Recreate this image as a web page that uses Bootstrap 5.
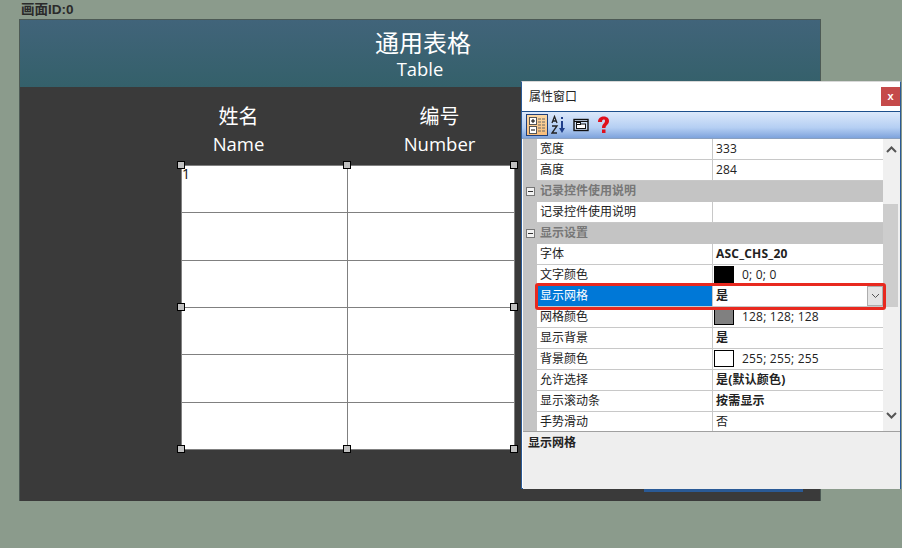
<!DOCTYPE html>
<html lang="zh-CN">

<head>
    <meta charset="UTF-8">
    <title>通用表格</title>
    <link href="https://cdn.jsdelivr.net/npm/bootstrap@5.3.0/dist/css/bootstrap.min.css" rel="stylesheet">
    <style>
        html, body {
            width: 902px;
            height: 548px;
            overflow: hidden;
        }

        body {
            background-color: #8b9b8c;
            font-family: "Open Sans", "Noto Sans CJK SC", sans-serif;
            position: relative;
        }

        .screen-id {
            height: 19px;
            padding-left: 21px;
            font: bold 13.5px/20px "Liberation Sans", "Noto Sans CJK SC", sans-serif;
            color: #2a2a2a;
        }

        .screen {
            width: 802px;
            height: 482px;
            margin-left: 19px;
            background: #3a3a3a;
            border: 1px solid #4d5a55;
            border-bottom: 0;
            color: #fff;
        }

        .screen-head {
            height: 67px;
            padding-top: 7px;
            background: linear-gradient(#41647a, #34606a);
            text-align: center;
            line-height: 1;
        }

        .head-cn { font-size: 24px; line-height: 32px; padding-left: 6px; }
        .head-en { font-size: 18.4px; line-height: 19px; }

        .col-heads {
            padding-left: 118px;
            height: 78px;
            text-align: center;
        }

        .col-head { width: 201px; padding-top: 15px; }
        .col-head div:first-child { font-size: 20px; line-height: 30px; }
        .col-head div:last-child { font-size: 18.5px; line-height: 24px; }

        .data-wrap {
            position: relative;
            width: 334px;
            margin-left: 161px;
        }

        .data-grid {
            width: 334px;
            height: 285px;
            display: grid;
            grid-template-columns: 166px 167px;
            grid-template-rows: repeat(6, 1fr);
            background: #fff;
            border-top: 1px solid #808080;
            border-left: 1px solid #808080;
            color: #111;
        }

        .data-grid div {
            border-right: 1px solid #808080;
            border-bottom: 1px solid #808080;
            font-size: 14px;
            line-height: 16px;
        }

        .handle {
            position: absolute;
            width: 8px;
            height: 8px;
            background: #c0c0c0;
            border: 1px solid #000;
        }

        .blue-strip {
            position: absolute;
            left: 644px;
            top: 489px;
            width: 159px;
            height: 3px;
            background: #2a5a96;
        }

        .prop-win {
            position: absolute;
            left: 521px;
            top: 81px;
            width: 380px;
            height: 408px;
            background: #fff;
            border: 1px solid #2a5a96;
            border-top-color: #d8d8d8;
            font-size: 12px;
            color: #222;
        }

        .win-title {
            height: 30px;
            padding: 0 0 0 7px;
            background: #fff;
            border-bottom: 1px solid #1d4f8c;
            font-size: 12px;
        }

        .win-close {
            width: 19px;
            height: 19px;
            background: #c54a4a;
            color: #fff;
            font: bold 11px/18px "Liberation Sans", sans-serif;
            text-align: center;
        }

        .win-tools {
            height: 27px;
            padding: 0 0 0 4px;
            background: linear-gradient(#dbe8fb, #b5cff3 60%, #7ea3dc);
            border-bottom: 1px solid #8aa0bf;
        }

        .tool-btn {
            width: 22px;
            height: 22px;
        }

        .tool-on {
            background: linear-gradient(#fcd8a4, #f9bd79);
            border: 1px solid #1f3f7a;
        }

        .prop-body {
            height: 292px;
            margin-left: 1px;
            overflow: hidden;
        }

        .prop-rows {
            width: 360px;
            background: #c4c4c4;
            line-height: 20px;
        }

        .prop-row {
            height: 21px;
            padding-left: 14px;
        }

        .prop-name {
            width: 176px;
            height: 21px;
            padding-left: 3px;
            background: #fff;
            border-right: 1px solid #c8c8c8;
            border-bottom: 1px solid #c8c8c8;
        }

        .prop-val {
            width: 170px;
            height: 21px;
            padding-left: 3px;
            background: #fff;
            border-bottom: 1px solid #c8c8c8;
            white-space: nowrap;
            letter-spacing: .2px;
        }

        .prop-group {
            height: 21px;
            padding-bottom: 2px;
            color: #777;
            font-weight: 700;
        }

        .minus-box {
            width: 9px;
            height: 9px;
            margin: 2px 5px 0 3px;
            background: #f2f2f2;
            border: 1px solid #777;
            position: relative;
        }

        .minus-box::after {
            content: "";
            position: absolute;
            left: 1px;
            right: 1px;
            top: 3px;
            height: 1px;
            background: #333;
        }

        .swatch {
            width: 20px;
            height: 17px;
            margin: 1px 8px 0 -2px;
            border: 1px solid #000;
        }

        .row-active .prop-name { background: #0078d7; color: #fff; }

        .combo-arrow {
            width: 16px;
            height: 20px;
            margin-left: auto;
            background: #e4e4e4;
            border: 1px solid #adadad;
        }

        .prop-scroll {
            width: 17px;
            background: #f0f0f0;
            position: relative;
        }

        .scroll-thumb {
            position: absolute;
            left: 0;
            width: 15px;
            background: #cdcdcd;
        }

        .scroll-up { top: 7px; left: 3px; }
        .scroll-down { bottom: 12px; left: 3px; }

        .red-mark {
            position: absolute;
            left: 535px;
            top: 283px;
            width: 351px;
            height: 27px;
            border: 3px solid #e8291f;
            border-radius: 3px;
        }

        .prop-desc {
            height: 58px;
            margin-left: 1px;
            background: #eeeeee;
            border-top: 1px solid #a0a0a0;
            padding: 2px 5px;
            font-weight: 700;
        }
    </style>
</head>

<body>
    <div class="screen-id">画面ID:0</div>

    <div class="screen">
        <div class="screen-head">
            <div class="head-cn">通用表格</div>
            <div class="head-en">Table</div>
        </div>
        <div class="d-flex col-heads">
            <div class="col-head">
                <div>姓名</div>
                <div>Name</div>
            </div>
            <div class="col-head">
                <div>编号</div>
                <div>Number</div>
            </div>
        </div>
        <div class="data-wrap">
            <div class="data-grid">
                <div>1</div><div></div>
                <div></div><div></div>
                <div></div><div></div>
                <div></div><div></div>
                <div></div><div></div>
                <div></div><div></div>
            </div>
            <span class="handle" style="left:-4px;top:-4px"></span>
            <span class="handle" style="left:162px;top:-4px"></span>
            <span class="handle" style="left:329px;top:-4px"></span>
            <span class="handle" style="left:-4px;top:138px"></span>
            <span class="handle" style="left:329px;top:138px"></span>
            <span class="handle" style="left:-4px;top:280px"></span>
            <span class="handle" style="left:162px;top:280px"></span>
            <span class="handle" style="left:329px;top:280px"></span>
        </div>
    </div>

    <div class="blue-strip"></div>

    <!-- property window -->
    <div class="prop-win">
        <div class="d-flex align-items-center justify-content-between win-title">
            <span>属性窗口</span>
            <span class="win-close">x</span>
        </div>
        <div class="d-flex align-items-center win-tools">
            <span class="tool-btn tool-on d-flex align-items-center justify-content-center">
                <svg width="18" height="19" viewBox="0 0 18 19">
                    <rect x="1.5" y="1.5" width="7" height="7" fill="#fff" stroke="#555"/>
                    <rect x="1.5" y="10.5" width="7" height="7" fill="#fff" stroke="#555"/>
                    <path d="M3 5h4M5 3v4M3 14h4" stroke="#000"/>
                    <path d="M10 3h7M10 6h7M10 9h7M10 12h7M10 15h7" stroke="#666" stroke-dasharray="3 1"/>
                </svg>
            </span>
            <span class="tool-btn d-flex align-items-center justify-content-center">
                <svg width="16" height="20" viewBox="0 0 16 20">
                    <path d="M1 8l2.500-6.500L6 8M2 6h3M1 11h5l-5 7h5" fill="none" stroke="#222" stroke-width="1.300"/>
                    <path d="M10 2h2v2h-2zM10 6h2v8h-2z" fill="#1f3f8a"/>
                    <path d="M8 13h6l-3 5z" fill="#1f3f8a"/>
                </svg>
            </span>
            <span class="tool-btn d-flex align-items-center justify-content-center">
                <svg width="16" height="14" viewBox="0 0 16 14">
                    <rect x="1" y="1.500" width="14" height="11" fill="#cfe0f6" stroke="#111" stroke-width="1.400"/>
                    <path d="M1 3.500h14" stroke="#111"/>
                    <rect x="3.500" y="6" width="9" height="4.500" fill="#fff" stroke="#111"/>
                    <rect x="3.500" y="4.500" width="4" height="2" fill="#fff" stroke="#111"/>
                </svg>
            </span>
            <span class="tool-btn d-flex align-items-center justify-content-center">
                <svg width="13" height="18" viewBox="0 0 13 18">
                    <path d="M1 6C1-1 12-1 12 5c0 3.500-3.500 4-3.500 7H5c0-4.500 3-4.500 3-7c0-2-3-2-3 1z" fill="#e0101c"/>
                    <rect x="5" y="13.500" width="3.500" height="3.500" fill="#e0101c"/>
                </svg>
            </span>
        </div>
        <div class="d-flex prop-body">
            <div class="prop-rows">
                <div class="d-flex prop-row"><div class="prop-name">宽度</div><div class="prop-val">333</div></div>
                <div class="d-flex prop-row"><div class="prop-name">高度</div><div class="prop-val">284</div></div>
                <div class="d-flex align-items-center prop-group"><span class="minus-box"></span><span>记录控件使用说明</span></div>
                <div class="d-flex prop-row"><div class="prop-name">记录控件使用说明</div><div class="prop-val"></div></div>
                <div class="d-flex align-items-center prop-group"><span class="minus-box"></span><span>显示设置</span></div>
                <div class="d-flex prop-row"><div class="prop-name">字体</div><div class="prop-val fw-bold">ASC_CHS_20</div></div>
                <div class="d-flex prop-row"><div class="prop-name">文字颜色</div><div class="prop-val d-flex"><span class="swatch" style="background:#000"></span>0; 0; 0</div></div>
                <div class="d-flex prop-row row-active"><div class="prop-name">显示网格</div><div class="prop-val d-flex fw-bold"><span>是</span>
                    <span class="combo-arrow d-flex align-items-center justify-content-center"><svg width="9" height="6" viewBox="0 0 9 6"><path d="M1 1l3.500 3.500L8 1" fill="none" stroke="#555"/></svg></span></div></div>
                <div class="d-flex prop-row"><div class="prop-name">网格颜色</div><div class="prop-val d-flex"><span class="swatch" style="background:#808080"></span>128; 128; 128</div></div>
                <div class="d-flex prop-row"><div class="prop-name">显示背景</div><div class="prop-val fw-bold">是</div></div>
                <div class="d-flex prop-row"><div class="prop-name">背景颜色</div><div class="prop-val d-flex"><span class="swatch" style="background:#fff"></span>255; 255; 255</div></div>
                <div class="d-flex prop-row"><div class="prop-name">允许选择</div><div class="prop-val fw-bold">是(默认颜色)</div></div>
                <div class="d-flex prop-row"><div class="prop-name">显示滚动条</div><div class="prop-val fw-bold">按需显示</div></div>
                <div class="d-flex prop-row"><div class="prop-name">手势滑动</div><div class="prop-val">否</div></div>
            </div>
            <div class="prop-scroll">
                <span class="scroll-thumb" style="top:65px;height:103px"></span>
                <svg class="position-absolute scroll-up" width="11" height="7" viewBox="0 0 11 7"><path d="M1 6l4.500-4.500L10 6" fill="none" stroke="#555" stroke-width="2"/></svg>
                <svg class="position-absolute scroll-down" width="11" height="7" viewBox="0 0 11 7"><path d="M1 1l4.500 4.500L10 1" fill="none" stroke="#555" stroke-width="2"/></svg>
            </div>
        </div>
        <div class="prop-desc">显示网格</div>
    </div>

    <div class="red-mark"></div>
</body>

<script src="https://cdn.jsdelivr.net/npm/bootstrap@5.3.0/dist/js/bootstrap.bundle.min.js"></script>

</html>
